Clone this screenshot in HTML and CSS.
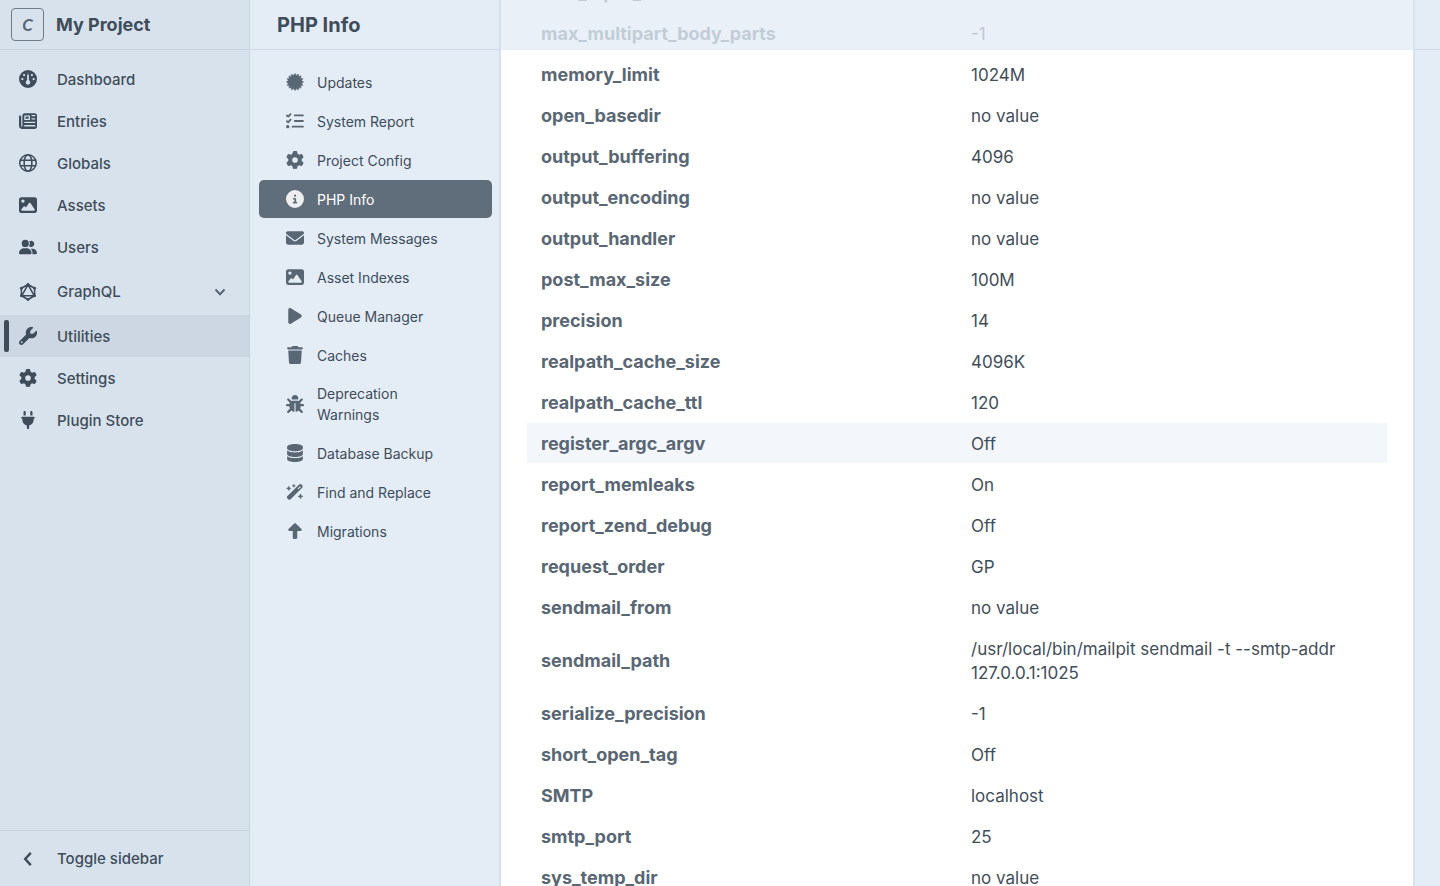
FILE: index.html
```html
<!DOCTYPE html>
<html lang="en">
<head>
<meta charset="utf-8">
<title>PHP Info - My Project</title>
<meta name="viewport" content="width=device-width, initial-scale=1">
<link rel="stylesheet" href="styles.css">
</head>
<body>
<svg class="sprite" aria-hidden="true">
  <symbol id="gear" viewBox="0 0 512 512"><path fill-rule="evenodd" d="M495.9 166.6c3.2 8.700.5 18.400-6.400 24.600l-43.300 39.400c1.100 8.300 1.700 16.800 1.700 25.400s-.6 17.100-1.700 25.400l43.300 39.400c6.900 6.200 9.600 15.900 6.400 24.600c-4.400 11.900-9.700 23.300-15.800 34.300l-4.700 8.100c-6.600 11-14 21.400-22.100 31.200c-5.900 7.200-15.700 9.600-24.500 6.800l-55.700-17.700c-13.400 10.300-28.200 18.900-44 25.400l-12.500 57.100c-2 9.100-9 16.300-18.200 17.800c-13.800 2.300-28 3.500-42.500 3.500s-28.700-1.200-42.500-3.500c-9.200-1.500-16.200-8.700-18.200-17.800l-12.500-57.100c-15.800-6.500-30.600-15.100-44-25.400L83.100 425.900c-8.800 2.800-18.600.3-24.500-6.800c-8.100-9.800-15.500-20.200-22.100-31.200l-4.700-8.100c-6.100-11-11.400-22.400-15.800-34.300c-3.200-8.700-.5-18.400 6.400-24.600l43.300-39.400C64.600 273.100 64 264.600 64 256s.6-17.100 1.700-25.400L22.400 191.200c-6.900-6.200-9.600-15.900-6.400-24.600c4.400-11.900 9.700-23.300 15.800-34.300l4.700-8.100c6.600-11 14-21.400 22.100-31.200c5.900-7.200 15.700-9.600 24.500-6.800l55.700 17.700c13.400-10.300 28.200-18.900 44-25.400l12.500-57.100c2-9.100 9-16.300 18.200-17.800C227.300 1.200 241.500 0 256 0s28.700 1.200 42.500 3.500c9.200 1.500 16.200 8.700 18.200 17.800l12.500 57.100c15.800 6.500 30.600 15.100 44 25.400l55.700-17.700c8.800-2.800 18.600-.3 24.500 6.800c8.100 9.800 15.500 20.200 22.100 31.200l4.700 8.100c6.100 11 11.400 22.400 15.800 34.300zM256 336a80 80 0 1 0 0-160 80 80 0 1 0 0 160z"/></symbol>
  <symbol id="image" viewBox="0 0 512 512"><path fill-rule="evenodd" d="M0 96C0 60.700 28.700 32 64 32H448c35.300 0 64 28.700 64 64V416c0 35.300-28.700 64-64 64H64c-35.300 0-64-28.700-64-64V96zM323.800 202.500c-4.500-6.600-11.900-10.500-19.800-10.500s-15.400 3.900-19.800 10.500l-87 127.600L170.700 297c-4.600-5.700-11.500-9-18.700-9s-14.200 3.300-18.700 9l-64 80c-5.800 7.200-6.900 17.100-2.900 25.400s12.400 13.600 21.600 13.600H424c8.900 0 17.100-4.900 21.200-12.800s3.600-17.400-1.400-24.700l-120-176zM112 192a48 48 0 1 0 0-96 48 48 0 1 0 0 96z"/></symbol>
  <symbol id="gauge" viewBox="0 0 512 512"><path fill-rule="evenodd" d="M0 256a256 256 0 1 1 512 0A256 256 0 1 1 0 256zM288 96a32 32 0 1 0-64 0 32 32 0 1 0 64 0zM256 416c35.300 0 64-28.700 64-64c0-26.900-16.500-49.900-40-59.300V88c0-13.300-10.700-24-24-24s-24 10.700-24 24V292.700c-23.500 9.500-40 32.500-40 59.300c0 35.300 28.700 64 64 64zM176 144a32 32 0 1 0-64 0 32 32 0 1 0 64 0zM96 288a32 32 0 1 0 0-64 32 32 0 1 0 0 64zm352-32a32 32 0 1 0-64 0 32 32 0 1 0 64 0zM368 176a32 32 0 1 0 0-64 32 32 0 1 0 0 64z"/></symbol>
  <symbol id="newspaper" viewBox="0 0 512 512"><path fill-rule="evenodd" d="M96 96c0-35.300 28.700-64 64-64H448c35.300 0 64 28.700 64 64V416c0 35.300-28.700 64-64 64H80c-44.200 0-80-35.800-80-80V128c0-17.700 14.300-32 32-32s32 14.300 32 32V400c0 8.800 7.200 16 16 16s16-7.200 16-16V96zM150 96v132h162V96zM358 86v38h104V86zM358 176v38h104v-38zM150 278v38h312v-38zM150 372v38h312v-38z"/><path d="M186 132h90v60h-90z"/></symbol>
  <symbol id="globe" viewBox="0 0 512 512"><g fill="none" stroke="currentColor" stroke-width="44"><circle cx="256" cy="256" r="234"/><ellipse cx="256" cy="256" rx="110" ry="234"/><path d="M32 176H480M32 336H480"/></g></symbol>
  <symbol id="users" viewBox="0 0 640 512"><path d="M96 128a128 128 0 1 1 256 0A128 128 0 1 1 96 128zM0 482.300C0 383.800 79.800 304 178.300 304h91.400C368.200 304 448 383.800 448 482.300c0 16.400-13.300 29.700-29.700 29.700H29.700C13.300 512 0 498.700 0 482.300zM609.300 512H471.400c5.400-9.400 8.600-20.300 8.600-32v-8c0-60.700-27.100-115.200-69.800-151.800c2.400-.1 4.700-.2 7.100-.2h61.400C567.800 320 640 392.200 640 481.300c0 17-13.800 30.700-30.700 30.700zM432 256c-31 0-59-12.600-79.300-32.900C372.400 196.500 384 163.600 384 128c0-26.800-6.600-52.100-18.300-74.300C384.300 40.100 407.200 32 432 32c61.900 0 112 50.100 112 112s-50.100 112-112 112z"/></symbol>
  <symbol id="graphql" viewBox="0 0 512 512"><g fill="none" stroke="currentColor" stroke-width="44"><path d="M256 42 444 150V362L256 470 68 362V150zM256 45 80 362H432z"/></g><circle cx="256" cy="42" r="40"/><circle cx="444" cy="150" r="40"/><circle cx="444" cy="362" r="40"/><circle cx="256" cy="470" r="40"/><circle cx="68" cy="362" r="40"/><circle cx="68" cy="150" r="40"/></symbol>
  <symbol id="wrench" viewBox="0 0 512 512"><path fill-rule="evenodd" d="M352 320c88.400 0 160-71.600 160-160c0-15.300-2.200-30.100-6.200-44.200c-3.100-10.800-16.400-13.200-24.300-5.300l-76.800 76.800c-3 3-7.100 4.700-11.300 4.700H336c-8.800 0-16-7.200-16-16V118.600c0-4.200 1.700-8.300 4.700-11.300l76.800-76.800c7.900-7.900 5.400-21.200-5.300-24.300C382.100 2.200 367.300 0 352 0C263.600 0 192 71.600 192 160c0 19.100 3.400 37.500 9.500 54.500L19.900 396.100C7.200 408.800 0 426.100 0 444.100C0 481.600 30.400 512 67.900 512c18 0 35.300-7.200 48-19.900L297.500 310.500c17 6.200 35.400 9.500 54.500 9.500zM80 408a24 24 0 1 1 0 48 24 24 0 1 1 0-48z"/></symbol>
  <symbol id="plug" viewBox="0 0 384 512"><path d="M96 0C78.300 0 64 14.300 64 32v96h64V32c0-17.700-14.300-32-32-32zM288 0c-17.700 0-32 14.300-32 32v96h64V32c0-17.700-14.300-32-32-32zM32 160c-17.700 0-32 14.300-32 32s14.300 32 32 32v32c0 77.400 55 142 128 156.800V480c0 17.700 14.300 32 32 32s32-14.300 32-32V412.800C297 398 352 333.400 352 256V224c17.700 0 32-14.300 32-32s-14.300-32-32-32H32z"/></symbol>
  <symbol id="chevron-down" viewBox="0 0 12 12"><path d="M1.500 3.500 6 8.200 10.500 3.500" fill="none" stroke="currentColor" stroke-width="2"/></symbol>
  <symbol id="chevron-left" viewBox="0 0 16 16"><path d="M10.500 2.500 5.500 8l5 5.500" fill="none" stroke="currentColor" stroke-width="2.200"/></symbol>
  <symbol id="certificate" viewBox="0 0 24 24"><path stroke="currentColor" stroke-width=".8" stroke-linejoin="round" d="M12.0 0.6 13.900 3.200 16.400 1.500 17.100 4.600 20.100 3.900 19.400 6.900 22.500 7.600 20.800 10.100 23.400 12.0 20.800 13.900 22.500 16.400 19.400 17.100 20.100 20.100 17.100 19.400 16.400 22.500 13.900 20.800 12.0 23.400 10.100 20.800 7.600 22.500 6.900 19.400 3.900 20.100 4.600 17.100 1.500 16.400 3.200 13.900 0.600 12.0 3.200 10.100 1.500 7.600 4.600 6.900 3.900 3.900 6.900 4.600 7.600 1.500 10.100 3.200z"/></symbol>
  <symbol id="list-check" viewBox="0 0 512 512"><path fill="none" stroke="currentColor" stroke-width="52" stroke-linecap="round" stroke-linejoin="round" d="M26 100 62 132 130 60M26 260 62 292 130 220M250 96H482M250 256H482M186 416H482"/><circle cx="48" cy="416" r="48"/></symbol>
  <symbol id="info" viewBox="0 0 512 512"><path fill-rule="evenodd" d="M256 512A256 256 0 1 0 256 0a256 256 0 1 0 0 512zM216 336h24V272H216c-13.300 0-24-10.700-24-24s10.700-24 24-24h48c13.300 0 24 10.700 24 24v88h8c13.300 0 24 10.700 24 24s-10.700 24-24 24H216c-13.300 0-24-10.700-24-24s10.700-24 24-24zm40-208a32 32 0 1 1 0 64 32 32 0 1 1 0-64z"/></symbol>
  <symbol id="envelope" viewBox="0 0 512 512"><path d="M48 64C21.500 64 0 85.500 0 112c0 15.100 7.100 29.300 19.200 38.400L236.800 313.600c11.400 8.500 27 8.500 38.400 0L492.800 150.400c12.100-9.100 19.200-23.300 19.200-38.400c0-26.500-21.500-48-48-48H48zM0 176V384c0 35.300 28.700 64 64 64H448c35.300 0 64-28.700 64-64V176L294.400 339.200c-22.800 17.100-54 17.100-76.800 0L0 176z"/></symbol>
  <symbol id="play" viewBox="0 0 384 512"><path d="M73 39c-14.800-9.100-33.400-9.400-48.500-.9S0 62.600 0 80V432c0 17.400 9.400 33.400 24.500 41.900s33.700 8.100 48.500-.9L361 297c14.300-8.700 23-24.200 23-41s-8.700-32.200-23-41L73 39z"/></symbol>
  <symbol id="trash" viewBox="0 0 448 512"><path d="M135.200 17.700L128 32H32C14.300 32 0 46.300 0 64S14.300 96 32 96H416c17.700 0 32-14.300 32-32s-14.300-32-32-32H320l-7.200-14.300C307.400 6.800 296.300 0 284.200 0H163.800c-12.100 0-23.200 6.800-28.600 17.700zM416 128H32L53.200 467c1.600 25.300 22.600 45 47.900 45H346.900c25.300 0 46.300-19.700 47.900-45L416 128z"/></symbol>
  <symbol id="bug" viewBox="0 0 512 512"><path d="M256 0c53 0 96 43 96 96v3.600c0 15.700-12.700 28.400-28.400 28.400H188.400c-15.700 0-28.400-12.700-28.400-28.400V96c0-53 43-96 96-96zM41.400 105.400c12.500-12.500 32.800-12.500 45.300 0l64 64c.7.7 1.300 1.400 1.900 2.100c14.200-7.300 30.400-11.400 47.500-11.400H312c17.100 0 33.200 4.100 47.500 11.400c.6-.7 1.200-1.400 1.900-2.100l64-64c12.500-12.500 32.800-12.500 45.300 0s12.500 32.800 0 45.300l-64 64c-.7.7-1.400 1.300-2.100 1.900c6.200 12 10.100 25.300 11.100 39.500H480c17.700 0 32 14.300 32 32s-14.300 32-32 32H416c0 24.600-5.500 47.800-15.400 68.600c2.200 1.300 4.200 2.900 6 4.800l64 64c12.500 12.500 12.500 32.800 0 45.300s-32.800 12.500-45.300 0l-63.100-63.100c-24.500 21.800-55.800 36.200-90.300 39.600V240c0-8.800-7.200-16-16-16s-16 7.200-16 16V479.200c-34.500-3.400-65.800-17.800-90.300-39.600L86.600 502.600c-12.500 12.500-32.800 12.500-45.300 0s-12.500-32.800 0-45.300l64-64c1.900-1.900 3.900-3.400 6-4.800C101.500 367.800 96 344.600 96 320H32c-17.700 0-32-14.300-32-32s14.300-32 32-32H96.300c1.100-14.100 5-27.500 11.100-39.500c-.7-.6-1.400-1.200-2.100-1.900l-64-64c-12.500-12.500-12.500-32.800 0-45.300z"/></symbol>
  <symbol id="database" viewBox="0 0 448 512"><path d="M448 80v48c0 44.200-100.300 80-224 80S0 172.200 0 128V80C0 35.800 100.300 0 224 0S448 35.800 448 80zM393.200 214.700c20.800-7.400 39.900-16.900 54.800-28.600V288c0 44.200-100.300 80-224 80S0 332.200 0 288V186.100c14.900 11.800 34 21.200 54.800 28.600C99.700 230.700 159.500 240 224 240s124.300-9.300 169.200-25.300zM0 346.100c14.900 11.800 34 21.200 54.800 28.600C99.700 390.700 159.500 400 224 400s124.300-9.300 169.200-25.300c20.800-7.400 39.900-16.900 54.800-28.600V432c0 44.200-100.300 80-224 80S0 476.200 0 432V346.100z"/></symbol>
  <symbol id="wand" viewBox="0 0 576 512"><path fill-rule="evenodd" d="M46 382 420 18c22-22 56-22 78 0l20 20c22 22 22 56 0 78L148 486c-22 22-56 22-78 0l-24-24c-22-22-22-58 0-80zM372 146l24 24 78-78-24-24z"/><path d="M88 70 70 122 18 140l52 18 18 52 18-52 52-18-52-18zM250 10l-11 37-37 11 37 11 11 37 11-37 37-11-37-11zM464 314l-20 60-60 20 60 20 20 60 20-60 60-20-60-20z" stroke="currentColor" stroke-width="20" stroke-linejoin="round"/></symbol>
  <symbol id="arrow-up" viewBox="0 0 384 512"><path d="M214.600 41.400c-12.500-12.500-32.800-12.500-45.300 0L9 201.700c-20 20-6 54.300 22.600 54.300H128V448c0 17.700 14.300 32 32 32h64c17.700 0 32-14.300 32-32V256h96.400c28.600 0 42.600-34.300 22.600-54.300z"/></symbol>
</svg>

<div class="app">
  <div class="sidebar">
    <a class="brand" href="#"><span class="brand-mark">C</span><span class="brand-name">My Project</span></a>
    <nav class="primary" aria-label="Primary">
      <a class="primary-link" href="#"><svg class="icon"><use href="#gauge"/></svg>Dashboard</a>
      <a class="primary-link" href="#"><svg class="icon"><use href="#newspaper"/></svg>Entries</a>
      <a class="primary-link" href="#"><svg class="icon"><use href="#globe"/></svg>Globals</a>
      <a class="primary-link" href="#"><svg class="icon"><use href="#image"/></svg>Assets</a>
      <a class="primary-link" href="#"><svg class="icon"><use href="#users"/></svg>Users</a>
      <div class="primary-group">
        <a class="primary-link" href="#"><svg class="icon"><use href="#graphql"/></svg>GraphQL</a>
        <button class="expand" type="button" aria-label="Show GraphQL menu"><svg class="icon-small"><use href="#chevron-down"/></svg></button>
      </div>
      <a class="primary-link is-current" href="#" aria-current="page"><svg class="icon"><use href="#wrench"/></svg>Utilities</a>
      <a class="primary-link" href="#"><svg class="icon"><use href="#gear"/></svg>Settings</a>
      <a class="primary-link" href="#"><svg class="icon"><use href="#plug"/></svg>Plugin Store</a>
    </nav>
    <button class="toggle" type="button"><svg class="icon"><use href="#chevron-left"/></svg>Toggle sidebar</button>
  </div>

  <div class="utilities">
    <header class="utilities-header"><h1 class="title">PHP Info</h1></header>
    <nav class="secondary" aria-label="Utilities">
      <a class="secondary-link" href="#"><svg class="icon"><use href="#certificate"/></svg><span>Updates</span></a>
      <a class="secondary-link" href="#"><svg class="icon"><use href="#list-check"/></svg><span>System Report</span></a>
      <a class="secondary-link" href="#"><svg class="icon"><use href="#gear"/></svg><span>Project Config</span></a>
      <a class="secondary-link is-selected" href="#" aria-current="page"><svg class="icon"><use href="#info"/></svg><span>PHP Info</span></a>
      <a class="secondary-link" href="#"><svg class="icon"><use href="#envelope"/></svg><span>System Messages</span></a>
      <a class="secondary-link" href="#"><svg class="icon"><use href="#image"/></svg><span>Asset Indexes</span></a>
      <a class="secondary-link" href="#"><svg class="icon"><use href="#play"/></svg><span>Queue Manager</span></a>
      <a class="secondary-link" href="#"><svg class="icon"><use href="#trash"/></svg><span>Caches</span></a>
      <a class="secondary-link" href="#"><svg class="icon"><use href="#bug"/></svg><span>Deprecation Warnings</span></a>
      <a class="secondary-link" href="#"><svg class="icon"><use href="#database"/></svg><span>Database Backup</span></a>
      <a class="secondary-link" href="#"><svg class="icon"><use href="#wand"/></svg><span>Find and Replace</span></a>
      <a class="secondary-link" href="#"><svg class="icon"><use href="#arrow-up"/></svg><span>Migrations</span></a>
    </nav>
  </div>

  <main class="content">
    <div class="pane">
      <table class="info">
        <tbody>
          <tr><th scope="row">max_input_vars</th><td>5000</td></tr>
          <tr><th scope="row">max_multipart_body_parts</th><td>-1</td></tr>
          <tr><th scope="row">memory_limit</th><td>1024M</td></tr>
          <tr><th scope="row">open_basedir</th><td>no value</td></tr>
          <tr><th scope="row">output_buffering</th><td>4096</td></tr>
          <tr><th scope="row">output_encoding</th><td>no value</td></tr>
          <tr><th scope="row">output_handler</th><td>no value</td></tr>
          <tr><th scope="row">post_max_size</th><td>100M</td></tr>
          <tr><th scope="row">precision</th><td>14</td></tr>
          <tr><th scope="row">realpath_cache_size</th><td>4096K</td></tr>
          <tr><th scope="row">realpath_cache_ttl</th><td>120</td></tr>
          <tr class="is-hovered"><th scope="row">register_argc_argv</th><td>Off</td></tr>
          <tr><th scope="row">report_memleaks</th><td>On</td></tr>
          <tr><th scope="row">report_zend_debug</th><td>Off</td></tr>
          <tr><th scope="row">request_order</th><td>GP</td></tr>
          <tr><th scope="row">sendmail_from</th><td>no value</td></tr>
          <tr><th scope="row">sendmail_path</th><td>/usr/local/bin/mailpit sendmail -t --smtp-addr 127.0.0.1:1025</td></tr>
          <tr><th scope="row">serialize_precision</th><td>-1</td></tr>
          <tr><th scope="row">short_open_tag</th><td>Off</td></tr>
          <tr><th scope="row">SMTP</th><td>localhost</td></tr>
          <tr><th scope="row">smtp_port</th><td>25</td></tr>
          <tr><th scope="row">sys_temp_dir</th><td>no value</td></tr>
        </tbody>
      </table>
      <div class="pane-header"></div>
    </div>
    <div class="gutter"><div class="gutter-header"></div></div>
  </main>
</div>
</body>
</html>
```

FILE: styles.css
```css
* { box-sizing: border-box; }

body {
  margin: 0;
  background: #e4ecf6;
  color: #3f4d5a;
  font-family: Inter, "Liberation Sans", sans-serif;
}

a { color: inherit; text-decoration: none; }

button {
  margin: 0;
  padding: 0;
  border: 0;
  background: none;
  color: inherit;
  font: inherit;
  cursor: pointer;
}

.sprite { position: absolute; width: 0; height: 0; }

.icon {
  flex: none;
  width: 18px;
  height: 18px;
  fill: currentColor;
}

.icon-small { display: block; width: 12px; height: 12px; }

.app {
  display: grid;
  grid-template-columns: 250px 251px minmax(0, 1fr);
  height: 100vh;
  overflow: hidden;
}

.sidebar {
  display: flex;
  flex-direction: column;
  border-right: 1px solid #c9d4e1;
  background: #d8e2ed;
}

.brand {
  display: flex;
  align-items: center;
  gap: 12px;
  height: 50px;
  padding: 0 11px;
  border-bottom: 1px solid #c9d3df;
}

.brand-mark {
  display: grid;
  place-items: center;
  width: 33px;
  height: 33px;
  border: 1px solid #6f7d8b;
  border-radius: 4px;
  color: #596673;
  font-family: Lato, sans-serif;
  font-size: 17px;
  font-style: italic;
  font-weight: 700;
}

.brand-name { font-size: 18px; font-weight: 700; }

.primary {
  display: flex;
  flex: 1;
  flex-direction: column;
  padding-top: 8px;
}

.primary-link {
  display: flex;
  flex: none;
  align-items: center;
  gap: 20px;
  height: 42px;
  padding-left: 19px;
  font-size: 15px;
  font-weight: 500;
}

.primary-link.is-current {
  position: relative;
  background: #cdd7e3;
}

.primary-link.is-current::before {
  position: absolute;
  top: 5px;
  bottom: 5px;
  left: 4px;
  width: 5px;
  border-radius: 2px;
  background: #3f4d5a;
  content: "";
}

.primary-group {
  display: flex;
  flex: none;
  align-items: center;
  justify-content: space-between;
  height: 47px;
  padding-right: 23px;
}

.expand { color: #596673; }

.toggle {
  display: flex;
  align-items: center;
  gap: 20px;
  height: 56px;
  padding-left: 19px;
  border-top: 1px solid #c9d3df;
  font-size: 15px;
  font-weight: 500;
}

.utilities { border-right: 2px solid #d6e0ed; }

.utilities-header {
  display: flex;
  align-items: center;
  height: 50px;
  padding-left: 27px;
  border-bottom: 1px solid #d1dbe7;
}

.title { margin: 0; font-size: 20px; font-weight: 700; }

.secondary {
  display: flex;
  flex-direction: column;
  gap: 1px;
  padding: 13px 7px 0 9px;
}

.secondary-link {
  display: flex;
  align-items: center;
  gap: 13px;
  min-height: 38px;
  padding: 8px 40px 8px 27px;
  border-radius: 5px;
  font-size: 14px;
  line-height: 21px;
}

.secondary-link .icon { color: #596673; }

.secondary-link.is-selected { background: #606d7b; color: #ffffff; }

.secondary-link.is-selected .icon { color: #eeeeee; }

.content {
  display: grid;
  grid-template-columns: minmax(0, 1fr) 27px;
  min-height: 0;
}

.pane {
  position: relative;
  overflow: hidden;
  padding: 0 26px;
  background: #ffffff;
}

/* Frosted bar that scrolled rows pass under */
.pane-header {
  position: absolute;
  top: 0;
  right: 0;
  left: 0;
  height: 50px;
  background: rgba(227, 235, 245, 0.77);
}

.gutter { border-left: 2px solid #d9e3ee; }

.gutter-header { height: 50px; border-bottom: 1px solid #d1dbe7; }

/* The list is scrolled part of the way down */
.info {
  width: 100%;
  margin-top: -28px;
  border-collapse: separate;
  border-spacing: 0;
  table-layout: fixed;
  font-size: 17px;
  line-height: 24px;
}

.info th,
.info td {
  width: 50%;
  padding: 9px 14px 7px;
  border-bottom: 1px solid transparent;
  background-clip: padding-box;
  text-align: left;
  vertical-align: middle;
}

.info th { color: #596673; font-size: 18px; font-weight: 700; }

.info .is-hovered th,
.info .is-hovered td { background-color: #f3f6fb; }
```
